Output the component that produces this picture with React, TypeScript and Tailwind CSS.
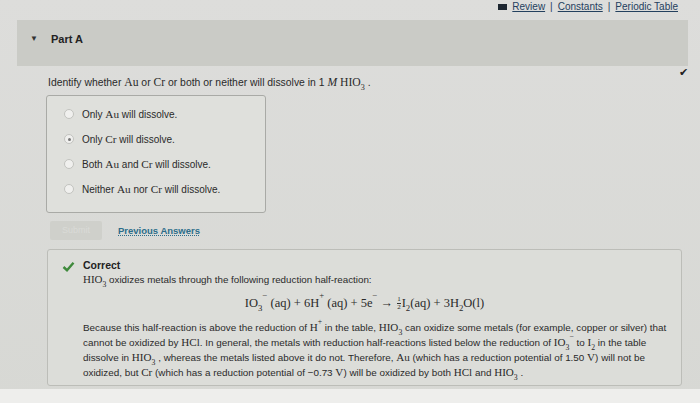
import React from "react";

const serif = "font-['Liberation_Serif','Times_New_Roman',serif]";

function Chem({ children, className = "" }: { children: React.ReactNode; className?: string }) {
  return <span className={`${serif} text-[1.12em] ${className}`}>{children}</span>;
}

function Sub({ children }: { children: React.ReactNode }) {
  return <sub className="text-[0.7em] align-[-0.25em] leading-none">{children}</sub>;
}

function Sup({ children }: { children: React.ReactNode }) {
  return <sup className="text-[0.7em] align-[0.45em] leading-none">{children}</sup>;
}

function Radio({ checked }: { checked?: boolean }) {
  return (
    <span className="w-[10px] h-[10px] rounded-full border border-[#c2c3bf] bg-[#f0f0ee] flex items-center justify-center shrink-0">
      {checked && <span className="w-[3px] h-[3px] rounded-full bg-[#777]" />}
    </span>
  );
}

const options: { label: React.ReactNode; checked?: boolean }[] = [
  { label: <>Only <Chem>Au</Chem> will dissolve.</> },
  { label: <>Only <Chem>Cr</Chem> will dissolve.</>, checked: true },
  { label: <>Both <Chem>Au</Chem> and <Chem>Cr</Chem> will dissolve.</> },
  { label: <>Neither <Chem>Au</Chem> nor <Chem>Cr</Chem> will dissolve.</> },
];

export default function App() {
  return (
    <div className="w-[700px] h-[403px] overflow-hidden bg-gradient-to-b from-[#dddddb] to-[#d7d8d4] font-['Liberation_Sans',Arial,sans-serif] text-[#2a2a2a] flex flex-col">
      {/* top links */}
      <div className="h-[20px] flex justify-end items-start pt-[1px] pr-[22px] text-[10px] leading-[11px] text-[#24405e]">
        <span className="w-[9px] h-[6px] bg-[#1d2630] mt-[3px] mr-[5px]" />
        <span className="underline">Review</span>
        <span className="mx-[5px]">|</span>
        <span className="underline">Constants</span>
        <span className="mx-[5px]">|</span>
        <span className="underline">Periodic Table</span>
      </div>

      {/* Part A header */}
      <div className="ml-[17px] mr-[12px] h-[46px] bg-[#cacbc6] flex items-start pt-[12px] pl-[13px]">
        <span className="text-[8px] leading-[14px] text-[#333] mr-[13px]">▼</span>
        <span className="text-[11px] leading-[14px] font-bold text-[#222]">Part A</span>
      </div>

      <div className="pl-[46px] pr-[8px] flex flex-col">
        <div className="h-[10px] flex justify-end pr-[4px] mt-[1px]">
          <span className="text-[11px] leading-[10px] text-[#222]">✔</span>
        </div>
        <div className="text-[10.4px] leading-[12px] pl-[2px]">
          Identify whether <Chem>Au</Chem> or <Chem>Cr</Chem> or both or neither will dissolve in 1{" "}
          <span className={`${serif} italic text-[1.12em]`}>M</span>{" "}
          <Chem>
            HIO<Sub>3</Sub>
          </Chem>{" "}
          .
        </div>

        <div className="mt-[5px] w-[220px] h-[118px] border border-[#a9aaa6] rounded-[3px] bg-[#dfe0dc] flex flex-col gap-[13px] pt-[12px] pl-[17px]">
          {options.map((o, i) => (
            <div key={i} className="h-[12px] flex items-center gap-[8px] text-[10px] leading-[12px]">
              <Radio checked={o.checked} />
              <span>{o.label}</span>
            </div>
          ))}
        </div>

        <div className="mt-[8px] flex items-center h-[19px]">
          <div className="ml-[4px] w-[52px] h-[19px] bg-[#cfd0cb] rounded-[2px] flex items-center justify-center text-[9px] text-[#dadbd7]">
            Submit
          </div>
          <span className="ml-[16px] text-[9.5px] leading-[12px] font-bold text-[#2b6d8a] underline decoration-dotted">
            Previous Answers
          </span>
        </div>
      </div>

      {/* feedback box */}
      <div className="mt-[9px] ml-[47px] mr-[18px] h-[137px] border border-[#bcbdb8] rounded-[3px] bg-[#dcddd9] flex flex-col pt-[10px] pl-[14px] pr-[6px]">
        <div className="flex items-center h-[12px]">
          <svg width="13" height="11" viewBox="0 0 13 11" className="mr-[8px]">
            <path d="M1.5 6 L5 9.2 L11.5 1.8" fill="none" stroke="#3f8a3c" strokeWidth="2.4" />
          </svg>
          <span className="text-[10.5px] font-bold text-[#222]">Correct</span>
        </div>
        <div className="pl-[21px] text-[9.8px] leading-[12px] mt-[1px]">
          <Chem>
            HIO<Sub>3</Sub>
          </Chem>{" "}
          oxidizes metals through the following reduction half-reaction:
        </div>
        <div className={`${serif} text-[12.5px] leading-[15px] mt-[9px] flex justify-center pr-[8px]`}>
          <span>
            IO<Sub>3</Sub>
            <Sup>−</Sup> (aq) + 6H<Sup>+</Sup> (aq) + 5e<Sup>−</Sup> →{" "}
            <span className="inline-flex flex-col align-middle text-[7px] leading-[7px] text-center mx-[1px]">
              <span>1</span>
              <span className="border-t border-[#333]">2</span>
            </span>
            I<Sub>2</Sub>(aq) + 3H<Sub>2</Sub>O(l)
          </span>
        </div>
        <div className="pl-[21px] text-[9.9px] leading-[14px] mt-[9px] whitespace-nowrap">
          Because this half-reaction is above the reduction of <Chem>H<Sup>+</Sup></Chem> in the table,{" "}
          <Chem>HIO<Sub>3</Sub></Chem> can oxidize some metals (for example, copper or silver) that
          <br />
          cannot be oxidized by <Chem>HCl</Chem>. In general, the metals with reduction half-reactions listed below the
          reduction of <Chem>IO<Sub>3</Sub><Sup>−</Sup></Chem> to <Chem>I<Sub>2</Sub></Chem> in the table
          <br />
          dissolve in <Chem>HIO<Sub>3</Sub></Chem> , whereas the metals listed above it do not. Therefore,{" "}
          <Chem>Au</Chem> (which has a reduction potential of 1.50 <Chem>V</Chem>) will not be
          <br />
          oxidized, but <Chem>Cr</Chem> (which has a reduction potential of −0.73 <Chem>V</Chem>) will be oxidized by
          both <Chem>HCl</Chem> and <Chem>HIO<Sub>3</Sub></Chem> .
        </div>
      </div>

      <div className="flex-1 mt-[3px] bg-[#eeeeec]" />
    </div>
  );
}
